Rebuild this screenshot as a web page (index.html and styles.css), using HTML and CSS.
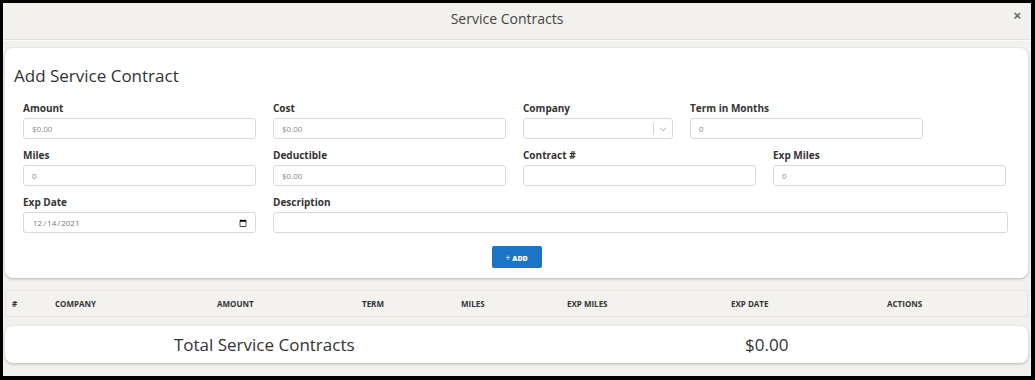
FILE: index.html
```html
<!DOCTYPE html>
<html lang="en">
  <head>
    <meta charset="UTF-8" />
    <meta name="viewport" content="width=device-width, initial-scale=1.0" />
    <title>Service Contracts</title>
    <link rel="stylesheet" href="styles.css">
  </head>
  <body>
    <div class="modal">
      <div class="modal__header">
        <h1 class="modal__title">Service Contracts</h1>
        <button class="modal__close">&times;</button>
      </div>
      <div class="modal__body">
        <div class="card form-card">
          <h2 class="form-card__title">Add Service Contract</h2>
          <div class="form">
            <div class="form__row">
              <label class="field">
                <span class="field__label">Amount</span>
                <input class="field__input" type="text" placeholder="$0.00" />
              </label>
              <label class="field">
                <span class="field__label">Cost</span>
                <input class="field__input" type="text" placeholder="$0.00" />
              </label>
              <div class="field field--select">
                <span class="field__label">Company</span>
                <div class="select">
                  <span class="select__value"></span>
                  <span class="select__sep"></span>
                  <svg class="select__arrow" viewBox="0 0 20 20">
                    <path fill="currentColor" d="M4.5 7.2l5.5 5.3 5.5-5.3 1 1-6.5 6.2-6.5-6.2z" />
                  </svg>
                </div>
              </div>
              <label class="field">
                <span class="field__label">Term in Months</span>
                <input class="field__input" type="text" placeholder="0" />
              </label>
            </div>
            <div class="form__row">
              <label class="field">
                <span class="field__label">Miles</span>
                <input class="field__input" type="text" placeholder="0" />
              </label>
              <label class="field">
                <span class="field__label">Deductible</span>
                <input class="field__input" type="text" placeholder="$0.00" />
              </label>
              <label class="field">
                <span class="field__label">Contract #</span>
                <input class="field__input" type="text" />
              </label>
              <label class="field">
                <span class="field__label">Exp Miles</span>
                <input class="field__input" type="text" placeholder="0" />
              </label>
            </div>
            <div class="form__row">
              <label class="field">
                <span class="field__label">Exp Date</span>
                <input class="field__input field__input--date" type="date" value="2021-12-14" />
              </label>
              <label class="field field--wide">
                <span class="field__label">Description</span>
                <input class="field__input" type="text" />
              </label>
            </div>
            <div class="form__actions">
              <button class="btn-add"><span class="btn-add__plus">+</span> ADD</button>
            </div>
          </div>
        </div>

        <div class="table-head">
          <span>#</span>
          <span>Company</span>
          <span>Amount</span>
          <span>Term</span>
          <span>Miles</span>
          <span>Exp Miles</span>
          <span>Exp Date</span>
          <span>Actions</span>
        </div>

        <div class="card total-card">
          <span>Total Service Contracts</span>
          <span>$0.00</span>
        </div>
      </div>
    </div>
  </body>
</html>
```

FILE: styles.css
```css
* {
  box-sizing: border-box;
}

body {
  margin: 0;
  height: 100vh;
  background: #000;
  padding: 3px 4px 4px 3px;
  font-family: "Open Sans", "Liberation Sans", Arial, sans-serif;
  color: #333;
}

.modal {
  height: 100%;
  background: #f2f1ed;
  display: flex;
  flex-direction: column;
}

.modal__header {
  position: relative;
  height: 37px;
  display: flex;
  align-items: center;
  justify-content: center;
  padding: 0 20px 6px 0;
  border-bottom: 1px solid #e3e2de;
  box-shadow: 0 1px 0 #fbfbf9;
}

.modal__title {
  margin: 0;
  font-size: 14px;
  font-weight: 400;
  color: #444;
}

.modal__close {
  position: absolute;
  right: 10px;
  top: 5px;
  background: none;
  border: none;
  padding: 0;
  font-size: 13px;
  font-weight: 700;
  color: #666;
  cursor: pointer;
}

.modal__body {
  padding: 8px 3px 0 2px;
}

.card {
  background: #fff;
  border-radius: 8px;
  box-shadow: 0 1px 3px rgba(0, 0, 0, 0.25);
}

.form-card {
  padding: 16px 20px 10px 9px;
}

.form-card__title {
  margin: 0 0 15px;
  font-size: 17px;
  font-weight: 400;
  color: #333;
}

.form {
  padding-left: 9px;
}

.form__row {
  display: flex;
  gap: 17px;
  margin-bottom: 10px;
}

.field {
  display: flex;
  flex-direction: column;
  width: 233px;
}

.field--select {
  width: 150px;
}

.field--wide {
  flex: 1;
}

.field__label {
  font-size: 10px;
  font-weight: 700;
  color: #333;
  height: 16px;
  line-height: 12px;
}

.field__input {
  height: 21px;
  border: 1px solid #d9d9d9;
  border-radius: 3px;
  padding: 0 8px;
  font-family: inherit;
  font-size: 8px;
  color: #777;
  background: #fff;
  outline: none;
}

.field__input::placeholder {
  color: #888;
}

.field__input--date {
  padding-right: 6px;
}

.field__input--date::-webkit-datetime-edit-text {
  padding: 0;
}

.select {
  height: 21px;
  border: 1px solid #d9d9d9;
  border-radius: 3px;
  display: flex;
  align-items: center;
  padding-right: 4px;
}

.select__value {
  flex: 1;
}

.select__sep {
  width: 1px;
  height: 12px;
  background: #d6d6d6;
  margin-right: 4px;
}

.select__arrow {
  width: 10px;
  height: 10px;
  color: #aaa;
}

.form__actions {
  display: flex;
  justify-content: center;
  padding-top: 3px;
  padding-left: 2px;
}

.btn-add {
  width: 50px;
  height: 22px;
  border: none;
  border-radius: 2px;
  background: #1b74c5;
  color: #fff;
  font-family: inherit;
  font-size: 7px;
  font-weight: 800;
  cursor: pointer;
}

.btn-add__plus {
  font-weight: 400;
  font-size: 9px;
}

.table-head {
  display: grid;
  grid-template-columns: 43px 162px 145px 99px 106px 164px 156px 1fr;
  align-items: center;
  height: 27px;
  margin-top: 12px;
  padding-left: 6px;
  border: 1px solid #e5e4e0;
  border-radius: 2px;
  background: #f3f2ef;
  font-size: 8px;
  font-weight: 700;
  text-transform: uppercase;
  color: #333;
}

.total-card {
  display: grid;
  grid-template-columns: 1fr 1fr;
  align-items: center;
  height: 37px;
  margin-top: 9px;
  padding: 0 10px 0 8px;
  text-align: center;
  font-size: 17px;
  color: #333;
}
```
